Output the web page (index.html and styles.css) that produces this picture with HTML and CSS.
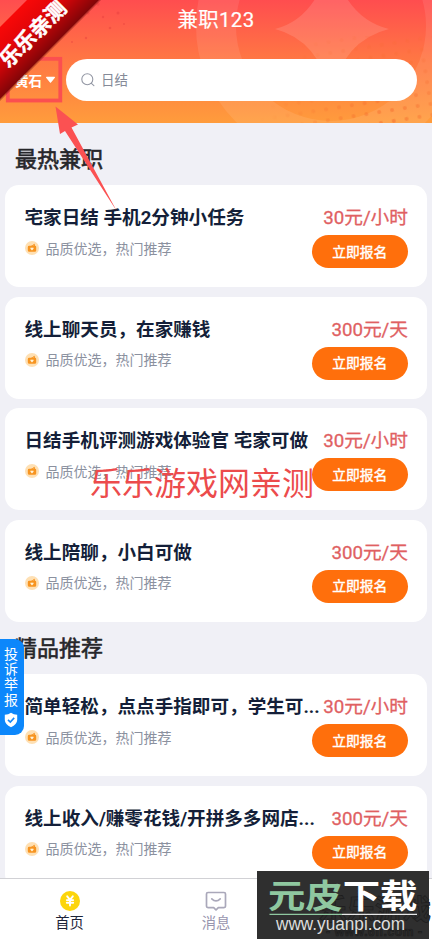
FILE: index.html
```html
<!DOCTYPE html>
<html lang="zh-CN">
<head>
<meta charset="utf-8">
<title>兼职123</title>
<link rel="stylesheet" href="styles.css">
</head>
<body>
<svg width="0" height="0" class="defs">
  <symbol id="bag" viewBox="0 0 14 14">
    <circle cx="7" cy="7" r="7" fill="#fee0b4"/>
    <path d="M4.2 4.8H6L7.5 4 8.6 4.8 8.2 3.2 9.6 2.8 10 4.8Q11.2 4.8 11.2 6V9.4Q11.2 10.8 9.8 10.8H4.3Q2.8 10.8 2.8 9.3V6.2Q2.8 4.8 4.2 4.8Z" fill="#f79420"/>
    <path d="M7 9.4L5.4 7.8Q5.2 6.5 6.2 6.5L7 7 7.8 6.5Q8.8 6.5 8.6 7.8Z" fill="#fff3d8"/>
  </symbol>
</svg>
<div class="screen">
  <header class="header">
    <svg class="pattern" width="432" height="123">
      <defs>
        <radialGradient id="fade" gradientUnits="userSpaceOnUse" cx="390" cy="130" r="130">
          <stop offset="0" stop-color="#fff"/><stop offset=".45" stop-color="#777"/><stop offset="1" stop-color="#000"/>
        </radialGradient>
        <mask id="dotmask"><rect width="432" height="123" fill="url(#fade)"/></mask>
        <pattern id="dots" width="13" height="11" patternUnits="userSpaceOnUse" patternTransform="rotate(-9)">
          <circle cx="6" cy="5" r="2" fill="#f4692c"/>
        </pattern>
      </defs>
      <circle cx="331" cy="26" r="115" fill="none" stroke="#fff" stroke-opacity=".09" stroke-width="40"/>
      <path d="M331-30Q343 20 389 29Q343 38 331 82Q319 38 275 29Q319 20 331-30Z" transform="translate(331 29) scale(1 1.25) translate(-331 -29)" fill="#fff" fill-opacity=".13"/>
      <rect x="240" y="36" width="192" height="87" fill="url(#dots)" mask="url(#dotmask)" opacity=".55"/>
      <g fill="#e33a3c" opacity=".4"><circle cx="88" cy="13" r="1.6"/><circle cx="98" cy="4" r="1.7"/><circle cx="110" cy="28" r="1.3"/><circle cx="118" cy="13" r="1.5"/><circle cx="86" cy="38" r="1.2"/><circle cx="72" cy="42" r="1"/><circle cx="124" cy="24" r="1"/><circle cx="103" cy="17" r="1.2"/></g>
    </svg>
    <h1 class="app-title">兼职123</h1>
    <div class="search-row">
      <div class="city">黄石<svg width="11" height="8" viewBox="0 0 11 8"><path d="M1.6 1.4H9.4L5.5 6.2Z" fill="#fff" stroke="#fff" stroke-width="1.2" stroke-linejoin="round"/></svg></div>
      <div class="search">
        <svg width="14" height="14" viewBox="0 0 14 14" fill="none" stroke="#9397a4" stroke-width="1.1" stroke-linecap="round"><circle cx="6.3" cy="6.3" r="5.5"/><path d="M10.4 10.4L12.9 12.7"/></svg>
        <span>日结</span>
      </div>
    </div>
  </header>
  <main class="content">
    <h2 class="heading first">最热兼职</h2>
    <article class="card"><div class="top"><h3>宅家日结 手机2分钟小任务</h3><b class="price">30元/小时</b></div><div class="bottom"><p><svg><use href="#bag"/></svg>品质优选，热门推荐</p><button>立即报名</button></div></article>
    <article class="card"><div class="top"><h3>线上聊天员，在家赚钱</h3><b class="price">300元/天</b></div><div class="bottom"><p><svg><use href="#bag"/></svg>品质优选，热门推荐</p><button>立即报名</button></div></article>
    <article class="card"><div class="top"><h3>日结手机评测游戏体验官 宅家可做</h3><b class="price">30元/小时</b></div><div class="bottom"><p><svg><use href="#bag"/></svg>品质优选，热门推荐</p><button>立即报名</button></div></article>
    <article class="card"><div class="top"><h3>线上陪聊，小白可做</h3><b class="price">300元/天</b></div><div class="bottom"><p><svg><use href="#bag"/></svg>品质优选，热门推荐</p><button>立即报名</button></div></article>
    <h2 class="heading second">精品推荐</h2>
    <article class="card"><div class="top"><h3>简单轻松，点点手指即可，学生可...</h3><b class="price">30元/小时</b></div><div class="bottom"><p><svg><use href="#bag"/></svg>品质优选，热门推荐</p><button>立即报名</button></div></article>
    <article class="card"><div class="top"><h3>线上收入/赚零花钱/开拼多多网店...</h3><b class="price">300元/天</b></div><div class="bottom"><p><svg><use href="#bag"/></svg>品质优选，热门推荐</p><button>立即报名</button></div></article>
  </main>
  <nav class="tabs">
    <a class="tab active">
      <svg width="22" height="22" viewBox="0 0 22 22"><circle cx="11" cy="11" r="10" fill="#fcd50b"/><path d="M8.2 6.3L11 9.8 13.8 6.3M11 9.8V15.6M7.8 10.1H14.2M7.8 12.7H14.2" fill="none" stroke="#fff" stroke-width="1.9" stroke-linecap="round"/></svg>
      <span>首页</span>
    </a>
    <a class="tab">
      <svg width="22" height="22" viewBox="0 0 22 22" fill="none" stroke="#aaa8ba" stroke-width="1.7" stroke-linejoin="round" stroke-linecap="round"><path d="M3 2.5H19Q20.5 2.5 20.5 4V16.3Q20.5 17.6 19 17.6H13.3L11 20 8.7 17.6H3Q1.5 17.6 1.5 16.3V4Q1.5 2.5 3 2.5Z"/><path d="M6.8 8.8Q11 13 15.2 8.8"/></svg>
      <span>消息</span>
    </a>
    <span class="tab"></span>
  </nav>

  <aside class="report"><span>投</span><span>诉</span><span>举</span><span>报</span>
    <svg width="14" height="16" viewBox="0 0 14 16"><path d="M7 .8Q9.5 2.7 13.2 2.8V8Q13 12.6 7 15.3 1 12.6.8 8V2.8Q4.5 2.7 7 .8Z" fill="#fff"/><path d="M4 7.8L6.3 10 10.2 5.9" fill="none" stroke="#1689fa" stroke-width="1.6"/></svg>
  </aside>
  <svg class="annotation" width="130" height="220">
    <rect x="7.8" y="58.8" width="52.5" height="41.7" fill="none" stroke="#fb4f50" stroke-width="3.8"/>
    <path d="M55.5 106.5L78 124.5 71.5 127.5 117 211.5 65 131 60 134Z" fill="#fb5152"/>
  </svg>
  <svg class="ribbon" width="110" height="110">
    <defs><linearGradient id="red" gradientUnits="userSpaceOnUse" x1="14" y1="14" x2="50" y2="50"><stop offset="0" stop-color="#f80808"/><stop offset=".45" stop-color="#df0508"/><stop offset="1" stop-color="#7e0508"/></linearGradient></defs>
    <path d="M28 0H101L0 101V28Z" fill="#500" opacity=".35"/>
    <path d="M27 0H99L0 99V27Z" fill="url(#red)"/>
    <text class="ribbon-text" transform="translate(32.5 33.5) rotate(-45)" x="0" y="8" text-anchor="middle">乐乐亲测</text>
  </svg>
  <div class="watermark">乐乐游戏网亲测</div>
  <div class="site">
    <svg width="175" height="69" viewBox="257 871 175 69">
      <rect x="257" y="871" width="172" height="68" fill="#2f2f2f"/>
      <g class="ghost"><text x="319" y="920" font-size="28">乐乐游戏</text><text x="326" y="936" font-size="12" textLength="96">- www.6ll.com -</text></g>
      <text class="brand" transform="translate(268 908) scale(1.15 1)"><tspan fill="#8fc8a0">元皮</tspan><tspan fill="#fff">下载</tspan></text>
      <path d="M269.5 914.4H342" stroke="#8fc8a0" stroke-width="1.3"/><path d="M342 914.4H417" stroke="#e8e8e8" stroke-width="1.3"/>
      <text class="url" x="276" y="929.5" textLength="129" lengthAdjust="spacingAndGlyphs">www.yuanpi.com</text>
    </svg>
  </div>
</div>
</body>
</html>
```
FILE: styles.css
```css
* { box-sizing: border-box; }
body, h1, h2, h3, p { margin: 0; }
body { font-family: Roboto, "Noto Sans CJK SC", sans-serif; background: #f0f0f5; }
.defs { position: absolute; }
.screen { position: relative; width: 432px; height: 940px; overflow: hidden; display: flex; flex-direction: column; background: #f0f0f6; }
.header { position: relative; height: 123px; flex: none; background: linear-gradient(#ff4d4f, #ff7444 45%, #ff9c3c); }
.pattern { position: absolute; left: 0; top: 0; }
.app-title { position: relative; height: 58px; padding-top: 6px; font-size: 20.4px; font-weight: 400; line-height: 29px; text-align: center; color: #fff; letter-spacing: .35px; -webkit-text-stroke: .2px #fff; }
.search-row { position: relative; display: flex; align-items: center; height: 43px; padding-right: 15px; }
.city { width: 66px; padding-left: 15px; display: flex; align-items: center; gap: 3px; color: #fff; font-size: 13.5px; font-weight: 700; white-space: nowrap; }
.search { flex: 1; height: 42px; border-radius: 21px; background: #fff; display: flex; align-items: center; gap: 6px; padding-left: 15px; font-size: 13.5px; color: #858a98; }
.search span { margin-top: -2px; }
.content { flex: 1; min-height: 0; overflow: hidden; padding: 0 5px; }
.heading { padding-left: 10px; font-size: 22px; font-weight: 400; color: #26262a; -webkit-text-stroke: .6px #26262a; }
.first { height: 62px; line-height: 73px; }
.second { height: 43px; line-height: 35px; }
.card { height: 102px; margin-bottom: 9.5px; border-radius: 14px; padding: 18px 19px 0 19.5px; background: #fff; }
.top { display: flex; justify-content: space-between; height: 29px; line-height: 30px; white-space: nowrap; }
.top h3 { font-size: 18.6px; font-weight: 700; color: #141f39; }
.price { font-size: 18.7px; font-weight: 400; color: #e06062; -webkit-text-stroke: .3px #e06062; }
.bottom { display: flex; justify-content: space-between; }
.bottom p { height: 31px; display: flex; align-items: center; gap: 7px; font-size: 14px; font-weight: 400; color: #8b919f; }
.bottom p svg { width: 14px; height: 14px; margin-top: 1px; }
.bottom button { width: 96.5px; height: 33px; margin-top: 3.2px; padding: 0 0 1.5px; border: 0; border-radius: 17px; background: #ff6f0c; color: #fff; font: 400 13.8px Roboto, "Noto Sans CJK SC", sans-serif; -webkit-text-stroke: .4px #fff; }
.tabs { flex: none; height: 62px; border-top: 1px solid #d1d1d5; background: #fff; display: grid; grid-template-columns: 139px 154px 139px; z-index: 0; }
.tab { display: flex; flex-direction: column; align-items: center; padding-top: 11px; font-size: 14.3px; line-height: 22px; color: #9895ae; }
.active { color: #1d2438; }
.report { position: absolute; left: 0; top: 639px; width: 24px; height: 96px; padding-top: 8px; border-radius: 0 9px 9px 0; background: #0c87fb; color: #fff; display: flex; flex-direction: column; align-items: center; font-size: 14px; line-height: 15.2px; }
.report span { margin-right: 2px; }
.report svg { margin-top: 4px; margin-right: 2px; flex: none; }
.annotation, .ribbon { position: absolute; left: 0; top: 0; }
.ribbon-text { font: 700 21px "Noto Sans CJK SC", sans-serif; fill: #fff; stroke: #fff; stroke-width: .5px; }
.watermark { position: absolute; left: 90px; top: 458px; font: 400 32px/46px "Noto Sans CJK SC", sans-serif; color: #ec4b4c; white-space: nowrap; }
.site { position: absolute; left: 257px; top: 871px; }
.site svg { display: block; }
.ghost { font-family: "Liberation Sans", "Noto Sans CJK SC", sans-serif; font-weight: 700; fill: #2c2c2c; stroke: #1d1d1d; stroke-width: .7px; }
.brand { font: 700 32.5px "Noto Sans CJK SC", sans-serif; }
.url { font: 18px "Liberation Sans", sans-serif; fill: #ddd; }
```
